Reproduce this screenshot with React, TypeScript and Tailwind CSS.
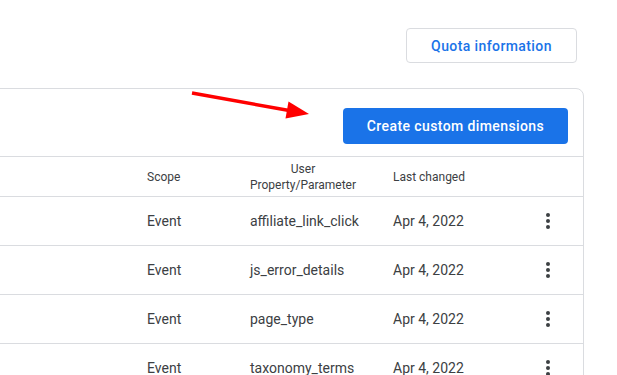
const rows = [
  { scope: 'Event', param: 'affiliate_link_click', changed: 'Apr 4, 2022' },
  { scope: 'Event', param: 'js_error_details', changed: 'Apr 4, 2022' },
  { scope: 'Event', param: 'page_type', changed: 'Apr 4, 2022' },
  { scope: 'Event', param: 'taxonomy_terms', changed: 'Apr 4, 2022' },
];

function Kebab() {
  return (
    <svg width="6" height="18" viewBox="0 0 6 18" className="text-[#3c4043]">
      <circle cx="3" cy="3" r="2" fill="currentColor" />
      <circle cx="3" cy="9" r="2" fill="currentColor" />
      <circle cx="3" cy="15" r="2" fill="currentColor" />
    </svg>
  );
}

export default function App() {
  return (
    <div
      className="relative h-[375px] w-[617px] overflow-hidden bg-white"
      style={{ fontFamily: 'Roboto, "Liberation Sans", sans-serif' }}
    >
      {/* top bar */}
      <div className="flex justify-end pt-[28px] pr-[40px]">
        <button className="h-[35px] w-[171px] rounded border border-[#dadce0] bg-white pt-px text-[14px] font-medium tracking-[0.4px] text-[#1a73e8]">
          Quota information
        </button>
      </div>

      {/* card */}
      <div className="mt-[25px] -ml-px mr-[33px] rounded-tr-lg border border-[#dadce0]">
        <div className="flex justify-end border-b border-[#dadce0] pt-[19px] pr-[15px] pb-[12px]">
          <button className="h-[36px] w-[225px] rounded bg-[#1a73e8] text-[14px] font-medium tracking-[0.4px] text-white">
            Create custom dimensions
          </button>
        </div>

        <div className="grid h-[40px] grid-cols-[147px_103px_143px_1fr_40px] items-center border-b border-[#dadce0] pr-[15px] text-[12px] leading-4 text-[#3c4043]">
          <div />
          <div>Scope</div>
          <div className="w-fit text-center">
            User
            <br />
            Property/Parameter
          </div>
          <div>Last changed</div>
          <div />
        </div>

        {rows.map((r) => (
          <div
            key={r.param}
            className="grid h-[49px] grid-cols-[147px_103px_143px_1fr_40px] items-center border-b border-[#dadce0] pr-[15px] text-[14px] text-[#3c4043]"
          >
            <div />
            <div>{r.scope}</div>
            <div>{r.param}</div>
            <div>{r.changed}</div>
            <div className="flex justify-center">
              <Kebab />
            </div>
          </div>
        ))}
      </div>

      {/* annotation arrow */}
      <svg
        className="pointer-events-none absolute top-0 left-0"
        width="617"
        height="375"
        viewBox="0 0 617 375"
      >
        <line x1="192" y1="93" x2="292" y2="111" stroke="#ff0000" strokeWidth="3.5" />
        <polygon points="309,114 288.5,101.6 285.5,118.4" fill="#ff0000" />
      </svg>
    </div>
  );
}
